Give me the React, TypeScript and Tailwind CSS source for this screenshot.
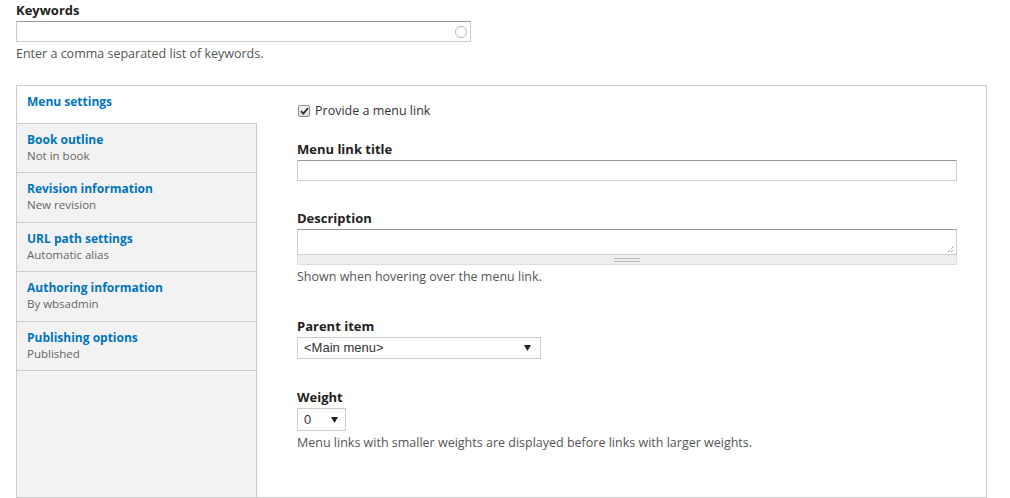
import React from 'react';

const tabs = [
  { id: 'menu', title: 'Menu settings', summary: '' },
  { id: 'book', title: 'Book outline', summary: 'Not in book' },
  { id: 'revision', title: 'Revision information', summary: 'New revision' },
  { id: 'path', title: 'URL path settings', summary: 'Automatic alias' },
  { id: 'author', title: 'Authoring information', summary: 'By wbsadmin' },
  { id: 'publish', title: 'Publishing options', summary: 'Published' },
];

const font = "font-['Open_Sans',sans-serif]";

const Label = ({ children }: { children: React.ReactNode }) => (
  <div className="text-[13px] font-bold leading-[16px] text-[#222] mb-[3px]">{children}</div>
);

const Help = ({ children }: { children: React.ReactNode }) => (
  <div className="text-[12.5px] leading-[16px] text-[#555] mt-[4px]">{children}</div>
);

const Caret = () => (
  <svg width="7" height="6" viewBox="0 0 7 6" className="fill-[#222]">
    <path d="M0 0h7L3.5 6z" />
  </svg>
);

const App = () => {
  return (
    <div className={`${font} bg-white w-[1010px] h-[498px] overflow-hidden pl-[16px] pt-[2px]`}>
      <div>
        <Label>Keywords</Label>
        <div className="w-[455px] h-[21px] border border-[#ccc] border-t-[#999] flex items-center justify-end pr-[3px]">
          <div className="w-[12px] h-[12px] rounded-full border-[1.5px] border-[#b5b5b5]" />
        </div>
        <Help>Enter a comma separated list of keywords.</Help>
      </div>

      <div className="mt-[23px] w-[971px] h-[413px] border border-[#ccc] flex">
        <ul className="w-[240px] bg-[#f2f2f2] border-r border-[#ccc] flex flex-col shrink-0">
          {tabs.map((t, i) => (
            <li
              key={t.id}
              className={
                i === 0
                  ? 'h-[38px] bg-white -mr-px pl-[10px] pt-[7px] border-b border-[#ccc]'
                  : 'h-[49.4px] pl-[10px] pt-[7px] border-b border-[#ccc]'
              }
            >
              <div className="text-[12px] font-bold leading-[17px] text-[#0074bd]">{t.title}</div>
              {t.summary && <div className="text-[11.5px] leading-[16px] text-[#666]">{t.summary}</div>}
            </li>
          ))}
        </ul>

        <div className="flex-1 pl-[40px] pt-[17px] pr-[29px]">
          <label className="flex items-center gap-[5px] h-[16px] text-[12.5px] text-[#333] leading-[16px]">
            <span className="w-[12px] h-[12px] ml-px rounded-[2px] border border-[#8f8f8f] bg-gradient-to-b from-[#f4f4f4] to-[#dcdcdc] flex items-center justify-center">
              <svg width="9" height="8" viewBox="0 0 9 8" className="fill-none stroke-[#333]">
                <path d="M1 4.2L3.4 6.6L8 1" strokeWidth="1.8" />
              </svg>
            </span>
            Provide a menu link
          </label>

          <div className="mt-[22px]">
            <Label>Menu link title</Label>
            <div className="h-[21px] border border-[#ccc] border-t-[#999]" />
          </div>

          <div className="mt-[29px]">
            <Label>Description</Label>
            <div className="h-[26px] border border-[#ccc] border-t-[#999] relative">
              <svg width="8" height="8" viewBox="0 0 8 8" className="absolute right-[1px] bottom-[1px] stroke-[#777]">
                <path d="M1 7L7 1M4 7L7 4" strokeWidth="1" strokeDasharray="1 1" />
              </svg>
            </div>
            <div className="h-[10px] bg-[#eee] border border-t-0 border-[#ddd] flex flex-col items-center justify-center gap-[2px]">
              <div className="w-[26px] h-px bg-[#bbb]" />
              <div className="w-[26px] h-px bg-[#bbb]" />
            </div>
            <Help>Shown when hovering over the menu link.</Help>
          </div>

          <div className="mt-[33px]">
            <Label>Parent item</Label>
            <div className="w-[244px] h-[22px] border border-[#ccc] flex items-center justify-between pl-[6px] pr-[9px] text-[13px] text-[#333] font-['Liberation_Sans',sans-serif]">
              <span>&lt;Main menu&gt;</span>
              <Caret />
            </div>
          </div>

          <div className="mt-[30px]">
            <Label>Weight</Label>
            <div className="w-[49px] h-[23px] border border-[#ccc] flex items-center justify-between pl-[6px] pr-[7px] text-[13px] text-[#333] font-['Liberation_Sans',sans-serif]">
              <span>0</span>
              <Caret />
            </div>
            <Help>Menu links with smaller weights are displayed before links with larger weights.</Help>
          </div>
        </div>
      </div>
    </div>
  );
};

export default App;
